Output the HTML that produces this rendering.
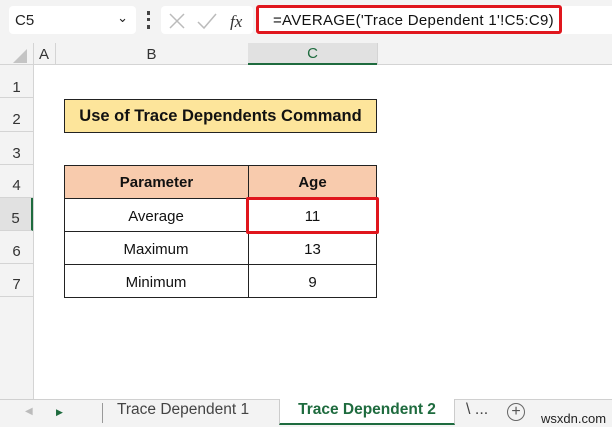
<!DOCTYPE html><html><head><style>
*{margin:0;padding:0;box-sizing:border-box}
body{width:612px;height:427px;overflow:hidden;background:#fff;font-family:"Liberation Sans",sans-serif;position:relative}
.a{position:absolute}
.rh{position:absolute;left:0;width:33px;text-align:center;font-size:15px;color:#333;border-bottom:1px solid #d4d4d4;background:#f3f3f3}
.c{position:absolute;display:flex;align-items:center;justify-content:center;font-size:15px;color:#111}
</style></head><body>
<div class="a" style="left:0;top:0;width:612px;height:43px;background:#f3f3f3"></div>
<div class="a" style="left:9px;top:6px;width:127px;height:28px;background:#fff;border-radius:4px;font-size:15px;padding:6px 6px;color:#222">C5<span style="position:absolute;right:8px;top:4px;font-size:13px">&#8964;</span></div>
<div class="a" style="left:147px;top:11px;width:3px;height:18px;border-left:3px dotted #444"></div>
<div class="a" style="left:161px;top:6px;width:92px;height:28px;background:#fff;border-radius:4px"></div>
<svg class="a" style="left:168px;top:12px" width="80" height="18"><path d="M2 2L16 16M16 2L2 16" stroke="#bbb" stroke-width="1.5"/><path d="M30 10L36 16L48 2" stroke="#bbb" stroke-width="1.5" fill="none"/><text x="62" y="15" font-family="Liberation Serif" font-style="italic" font-size="17" fill="#333">fx</text></svg>
<div class="a" style="left:256px;top:6px;width:356px;height:28px;background:#fff"></div>
<div class="a" style="left:256px;top:5px;width:306px;height:29px;border:3px solid #e0161d;border-radius:3px;font-size:15px;padding:4px 0 0 14px;color:#111;letter-spacing:0.3px">=AVERAGE('Trace Dependent 1'!C5:C9)</div>
<div class="a" style="left:0;top:43px;width:612px;height:22px;background:#f3f3f3;border-bottom:1px solid #d4d4d4"></div>
<svg class="a" style="left:12px;top:48px" width="16" height="16"><path d="M15 1V15H1Z" fill="#c4c4c4"/></svg>
<div class="a" style="left:33px;top:43px;width:1px;height:357px;background:#d4d4d4"></div>
<div class="c" style="left:33px;top:43px;width:22px;height:22px;color:#333">A</div>
<div class="a" style="left:55px;top:43px;width:1px;height:22px;background:#d4d4d4"></div>
<div class="c" style="left:55px;top:43px;width:193px;height:22px;color:#333">B</div>
<div class="a" style="left:248px;top:43px;width:1px;height:22px;background:#d4d4d4"></div>
<div class="c" style="left:248px;top:43px;width:129px;height:22px;background:#e1e1e1;color:#1e6b3e;border-bottom:2px solid #1e6b3e">C</div>
<div class="a" style="left:377px;top:43px;width:1px;height:22px;background:#d4d4d4"></div>
<div class="rh" style="top:65px;height:33px;line-height:46px">1</div>
<div class="rh" style="top:98px;height:34px;line-height:44px">2</div>
<div class="rh" style="top:132px;height:33px;line-height:44px">3</div>
<div class="rh" style="top:165px;height:33px;line-height:42px">4</div>
<div class="rh" style="top:198px;height:33px;line-height:42px;background:#e1e1e1;border-right:2px solid #1e6b3e">5</div>
<div class="rh" style="top:231px;height:33px;line-height:42px">6</div>
<div class="rh" style="top:264px;height:33px;line-height:42px">7</div>
<div class="rh" style="top:297px;height:103px"></div>
<div class="c" style="left:64px;top:99px;width:313px;height:34px;background:#fde59b;border:1px solid #222;font-weight:bold;font-size:16.5px">Use of Trace Dependents Command</div>
<div class="a" style="left:64px;top:165px;width:313px;height:133px;border:1px solid #222"></div>
<div class="c" style="left:65px;top:166px;width:183px;height:32px;background:#f8cbad;font-weight:bold">Parameter</div>
<div class="c" style="left:249px;top:166px;width:127px;height:32px;background:#f8cbad;font-weight:bold">Age</div>
<div class="a" style="left:248px;top:165px;width:1px;height:133px;background:#222"></div>
<div class="a" style="left:64px;top:198px;width:313px;height:1px;background:#222"></div>
<div class="a" style="left:64px;top:231px;width:313px;height:1px;background:#222"></div>
<div class="a" style="left:64px;top:264px;width:313px;height:1px;background:#222"></div>
<div class="c" style="left:64px;top:200px;width:184px;height:33px">Average</div>
<div class="c" style="left:64px;top:233px;width:184px;height:33px">Maximum</div>
<div class="c" style="left:64px;top:266px;width:184px;height:33px">Minimum</div>
<div class="c" style="left:248px;top:200px;width:129px;height:33px">11</div>
<div class="c" style="left:248px;top:233px;width:129px;height:33px">13</div>
<div class="c" style="left:248px;top:266px;width:129px;height:33px">9</div>
<div class="a" style="left:246px;top:197px;width:133px;height:37px;border:3px solid #e0161d;border-radius:2px"></div>
<div class="a" style="left:0;top:399px;width:612px;height:28px;background:#f3f3f3;border-top:1px solid #d0d0d0"></div>
<div class="a" style="left:25px;top:406px;font-size:10px;color:#bbb">&#9664;</div>
<div class="a" style="left:56px;top:407px;font-size:9px;color:#1e6b3e">&#9654;</div>
<div class="a" style="left:102px;top:403px;width:1px;height:20px;background:#999"></div>
<div class="a" style="left:117px;top:401px;font-size:15.5px;color:#444">Trace Dependent 1</div>
<div class="a" style="left:279px;top:399px;width:176px;height:26px;background:#fff;border-left:1px solid #ccc;border-right:1px solid #ccc;border-bottom:2px solid #1e6b3e;font-size:15.5px;font-weight:bold;color:#1e6b3e;text-align:center;line-height:22px">Trace Dependent 2</div>
<div class="a" style="left:466px;top:401px;font-size:16px;color:#444">\ ...</div>
<div class="a" style="left:507px;top:403px;width:18px;height:18px;border:1px solid #666;border-radius:50%;text-align:center;line-height:15px;font-size:16px;color:#555">+</div>
<div class="a" style="left:541px;top:411px;font-size:13px;color:#222">wsxdn.com</div>
</body></html>
